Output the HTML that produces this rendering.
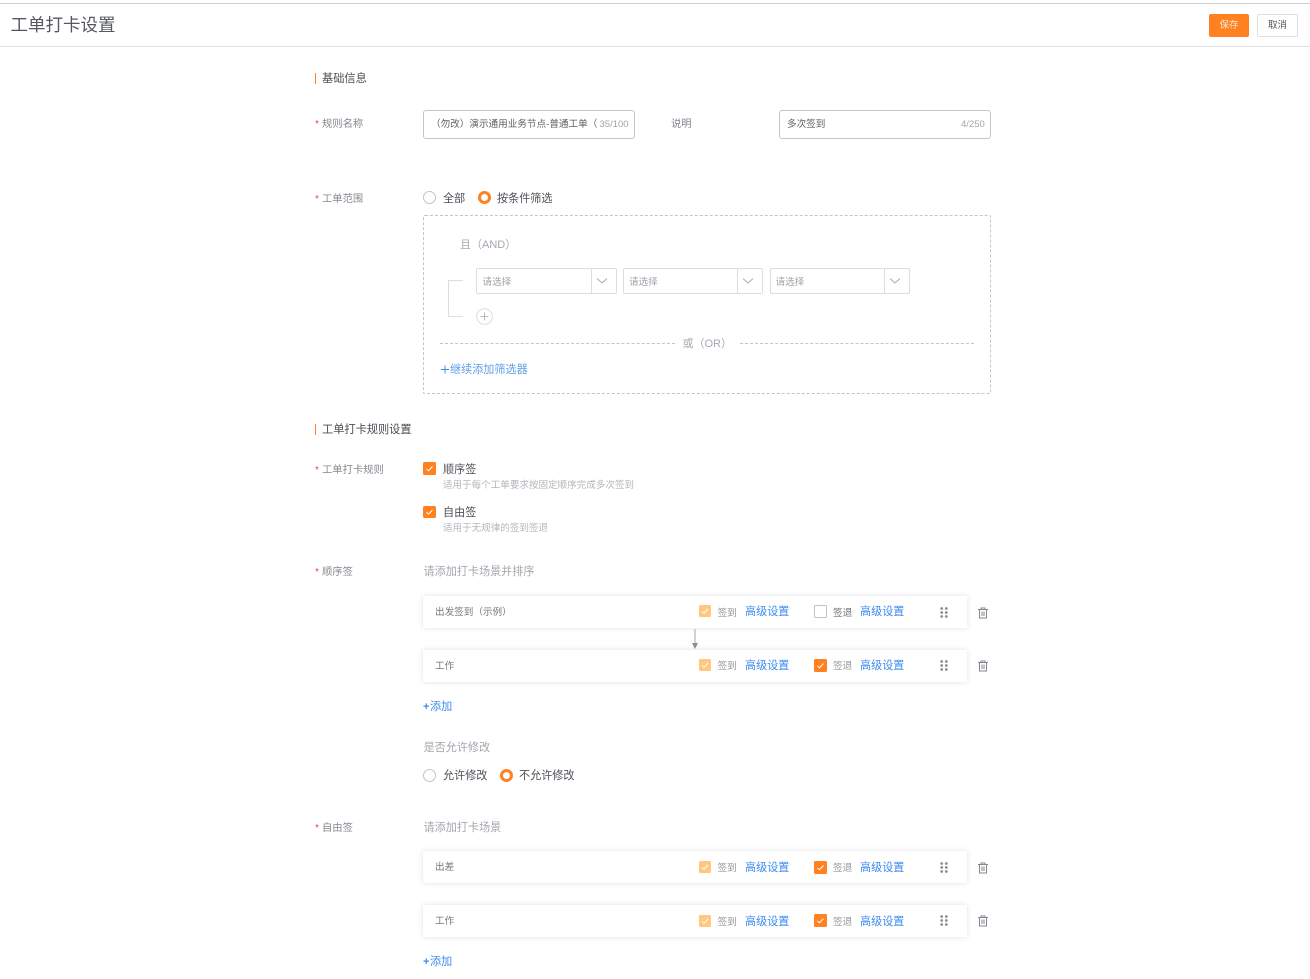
<!DOCTYPE html>
<html lang="zh"><head><meta charset="utf-8"><title>工单打卡设置</title>
<style>
html,body{margin:0;padding:0;background:#fff}
#p{position:relative;width:1310px;height:979px;overflow:hidden;background:#fff;font-family:"Liberation Sans","Noto Sans CJK SC",sans-serif;color:#55585f}
#p div{position:absolute;box-sizing:border-box}
.t{white-space:nowrap;line-height:16px;height:16px;margin-top:1px;filter:blur(.25px)}
.l{font-size:10.3px;color:#85888f;margin-top:2px}
.req{font-size:10px;color:#f0443e}
.sec{font-size:11.2px;color:#4a4d54}
.hint{font-size:11.1px;color:#a3a6ad}
.sub{font-size:9.55px;color:#b4b6bc;margin-top:2px}
.opt{font-size:11.1px;color:#4d5057}
.lk{font-size:11.1px;color:#3f8cf0}
.lk b{font-weight:700;letter-spacing:.5px}
.sg{font-size:9.7px;color:#93959b;margin-top:2px}
.rt{font-size:9.6px;color:#74777d;margin-top:2px}
.ph{font-size:9.6px;color:#9fa2a8;margin-top:2px}
.inp{font-size:9.6px;color:#5c5f66;margin-top:2px}
.card{left:423px;width:544px;height:32px;background:#fff;box-shadow:0 0 5px rgba(60,70,100,.16)}
.cb{width:13px;height:13px;border-radius:1.5px;background:#ff8120}
.cb.dis{background:#ffc880;width:12px;height:12px}
.cb.off{background:#fff;border:1px solid #bfc1c9}
.cb svg{position:absolute;left:0;top:0;width:100%;height:100%}
.sel{width:141px;height:26px;top:268px;border:1px solid #dcdde2;border-radius:2px}
.sel i{position:absolute;right:24px;top:0;bottom:0;border-left:1px solid #dcdde2;width:0}
.sel svg{position:absolute;right:8px;top:8px}
.radio{width:13px;height:13px;border-radius:50%;border:1px solid #c2c4cb;background:#fff}
.radio.on{border:3.5px solid #ff8120}
</style></head><body>
<div id="p">
<div style="left:0;top:3px;width:1310px;height:1px;background:#cfcfcf"></div>
<div style="left:0;top:46px;width:1310px;height:1px;background:#e0e0e6"></div>
<div class="t" style="left:10.500px;top:15px;height:20px;line-height:20px;margin-top:0;font-size:17.500px;color:#55585e">工单打卡设置</div>
<div class="t" style="left:1209px;top:14px;width:40px;height:23px;line-height:23px;margin-top:0;background:#ff8120;border-radius:2px;color:#ffe6d2;font-size:9.500px;text-align:center">保存</div>
<div class="t" style="left:1257px;top:14px;width:41px;height:23px;line-height:21px;margin-top:0;border:1px solid #dfe0e6;border-radius:2px;color:#55585f;font-size:9.500px;text-align:center">取消</div>

<div style="left:315px;top:73px;width:1px;height:11px;background:#ff8120"></div>
<div class="t sec" style="left:322px;top:70px">基础信息</div>
<div class="t req" style="left:315px;top:116px">*</div>
<div class="t l" style="left:322px;top:115px">规则名称</div>
<div style="left:423px;top:110px;width:212px;height:29px;border:1px solid #c4c6cf;border-radius:3px"></div>
<div class="t inp" style="left:431px;top:115px;width:166px;overflow:hidden">（勿改）演示通用业务节点-普通工单（示例）</div>
<div class="t" style="left:599.500px;top:116px;font-size:9.500px;color:#a3a5ab">35/100</div>
<div class="t l" style="left:671px;top:115px">说明</div>
<div style="left:779px;top:110px;width:212px;height:29px;border:1px solid #c4c6cf;border-radius:3px"></div>
<div class="t inp" style="left:787px;top:115px">多次签到</div>
<div class="t" style="left:961px;top:116px;font-size:9.500px;color:#a3a5ab">4/250</div>

<div class="t req" style="left:315px;top:191px">*</div>
<div class="t l" style="left:322px;top:190px">工单范围</div>
<div class="radio" style="left:423px;top:191px"></div>
<div class="t opt" style="left:443px;top:190px">全部</div>
<div class="radio on" style="left:477.500px;top:191px"></div>
<div class="t opt" style="left:497px;top:190px">按条件筛选</div>

<div style="left:423px;top:215px;width:568px;height:179px;border:1px dashed #c4c5ca;border-radius:2px"></div>
<div class="t" style="left:460px;top:236px;font-size:11px;color:#a4a8b2">且（AND）</div>
<div class="sel" style="left:476px"><i></i><svg width="12" height="8" viewBox="0 0 12 8"><path d="M1 1.500L6 6l5-4.500" fill="none" stroke="#a9abb3" stroke-width="1"/></svg></div>
<div class="t ph" style="left:482.500px;top:273px">请选择</div>
<div class="sel" style="left:623px;width:140px"><i></i><svg width="12" height="8" viewBox="0 0 12 8"><path d="M1 1.500L6 6l5-4.500" fill="none" stroke="#a9abb3" stroke-width="1"/></svg></div>
<div class="t ph" style="left:629px;top:273px">请选择</div>
<div class="sel" style="left:770px;width:140px"><i></i><svg width="12" height="8" viewBox="0 0 12 8"><path d="M1 1.500L6 6l5-4.500" fill="none" stroke="#a9abb3" stroke-width="1"/></svg></div>
<div class="t ph" style="left:775.500px;top:273px">请选择</div>
<div style="left:448px;top:280px;width:15px;height:37px;border:1px solid #dcdde1;border-right:0"></div>
<svg style="position:absolute;left:476px;top:308px" width="17" height="17" viewBox="0 0 17 17"><circle cx="8.500" cy="8.500" r="7.800" fill="none" stroke="#dcdde1"/><path d="M4.500 8.500h8M8.500 4.500v8" stroke="#b9bbc1" fill="none"/></svg>
<div style="left:440px;top:343px;width:235px;border-top:1px dashed #c4c5ca"></div>
<div style="left:740px;top:343px;width:234px;border-top:1px dashed #c4c5ca"></div>
<div class="t" style="left:682.500px;top:335px;font-size:11px;color:#a4a8b2">或（OR）</div>
<svg style="position:absolute;left:441px;top:365px" width="9" height="9" viewBox="0 0 9 9"><path d="M0 4.500h8M4 .5v8" stroke="#3f8cf0" fill="none"/></svg>
<div class="t lk" style="left:450px;top:361px;color:#5d9fe6">继续添加筛选器</div>

<div style="left:315px;top:424px;width:1px;height:11px;background:#ff8120"></div>
<div class="t sec" style="left:322px;top:421px">工单打卡规则设置</div>
<div class="t req" style="left:315px;top:462px">*</div>
<div class="t l" style="left:322px;top:461px">工单打卡规则</div>
<div class="cb" style="left:423px;top:462px"><svg viewBox="0 0 13 13"><path d="M3.500 6.800l2 2 4-4.300" fill="none" stroke="#fff" stroke-width="1"/></svg></div>
<div class="t opt" style="left:443px;top:461px">顺序签</div>
<div class="t sub" style="left:443px;top:476px">适用于每个工单要求按固定顺序完成多次签到</div>
<div class="cb" style="left:423px;top:506px;height:12px"><svg viewBox="0 0 13 12"><path d="M3.500 6.300l2 2 4-4.300" fill="none" stroke="#fff" stroke-width="1"/></svg></div>
<div class="t opt" style="left:443px;top:504px">自由签</div>
<div class="t sub" style="left:443px;top:519px">适用于无规律的签到签退</div>

<div class="t req" style="left:315px;top:564px">*</div>
<div class="t l" style="left:322px;top:563px">顺序签</div>
<div class="t hint" style="left:423.500px;top:563px">请添加打卡场景并排序</div>

<!-- row 1 -->
<div class="card" style="top:596px"></div>
<div class="t rt" style="left:435px;top:603px">出发签到（示例）</div>
<div class="cb dis" style="left:699px;top:605px"><svg viewBox="0 0 12 12"><path d="M3 6.300l2 2 4-4.300" fill="none" stroke="#fff" stroke-width="1"/></svg></div>
<div class="t sg" style="left:717.500px;top:604px">签到</div>
<div class="t lk" style="left:745px;top:603px">高级设置</div>
<div class="cb off" style="left:814px;top:605px"></div>
<div class="t sg" style="left:833px;top:604px;color:#6a6d73">签退</div>
<div class="t lk" style="left:860px;top:603px">高级设置</div>
<svg style="position:absolute;left:939px;top:606px" width="10" height="13" viewBox="0 0 10 13"><g fill="#8a8d96"><circle cx="2.700" cy="2.500" r="1.400"/><circle cx="7.300" cy="2.500" r="1.400"/><circle cx="2.700" cy="6.500" r="1.400"/><circle cx="7.300" cy="6.500" r="1.400"/><circle cx="2.700" cy="10.500" r="1.400"/><circle cx="7.300" cy="10.500" r="1.400"/></g></svg>
<svg style="position:absolute;left:977px;top:607px" width="12" height="12" viewBox="0 0 12 12"><path d="M1 2.500h10M4 2.500V1h4v1.500M2.500 2.500v8.500h7v-8.500M5 4.500v4.500M7 4.500v4.500" fill="none" stroke="#85878e" stroke-width="1"/></svg>
<svg style="position:absolute;left:691px;top:628px" width="8" height="22" viewBox="0 0 8 22"><path d="M4 1v15" stroke="#a5a7ae" fill="none"/><path d="M1 15h6l-3 6z" fill="#8e9098"/></svg>

<!-- row 2 -->
<div class="card" style="top:650px"></div>
<div class="t rt" style="left:435px;top:657px">工作</div>
<div class="cb dis" style="left:699px;top:659px"><svg viewBox="0 0 12 12"><path d="M3 6.300l2 2 4-4.300" fill="none" stroke="#fff" stroke-width="1"/></svg></div>
<div class="t sg" style="left:717.500px;top:657px">签到</div>
<div class="t lk" style="left:745px;top:657px">高级设置</div>
<div class="cb" style="left:814px;top:659px"><svg viewBox="0 0 13 13"><path d="M3.500 6.800l2 2 4-4.300" fill="none" stroke="#fff" stroke-width="1"/></svg></div>
<div class="t sg" style="left:833px;top:657px">签退</div>
<div class="t lk" style="left:860px;top:657px">高级设置</div>
<svg style="position:absolute;left:939px;top:659px" width="10" height="13" viewBox="0 0 10 13"><g fill="#8a8d96"><circle cx="2.700" cy="2.500" r="1.400"/><circle cx="7.300" cy="2.500" r="1.400"/><circle cx="2.700" cy="6.500" r="1.400"/><circle cx="7.300" cy="6.500" r="1.400"/><circle cx="2.700" cy="10.500" r="1.400"/><circle cx="7.300" cy="10.500" r="1.400"/></g></svg>
<svg style="position:absolute;left:977px;top:660px" width="12" height="12" viewBox="0 0 12 12"><path d="M1 2.500h10M4 2.500V1h4v1.500M2.500 2.500v8.500h7v-8.500M5 4.500v4.500M7 4.500v4.500" fill="none" stroke="#85878e" stroke-width="1"/></svg>

<div class="t lk" style="left:423px;top:698px"><b>+</b>添加</div>
<div class="t hint" style="left:423.500px;top:739px">是否允许修改</div>
<div class="radio" style="left:423px;top:769px"></div>
<div class="t opt" style="left:443px;top:767px">允许修改</div>
<div class="radio on" style="left:500px;top:769px"></div>
<div class="t opt" style="left:519px;top:767px">不允许修改</div>

<div class="t req" style="left:315px;top:820px">*</div>
<div class="t l" style="left:322px;top:819px">自由签</div>
<div class="t hint" style="left:423.500px;top:819px">请添加打卡场景</div>

<!-- row 3 -->
<div class="card" style="top:851px"></div>
<div class="t rt" style="left:435px;top:858px">出差</div>
<div class="cb dis" style="left:699px;top:861px"><svg viewBox="0 0 12 12"><path d="M3 6.300l2 2 4-4.300" fill="none" stroke="#fff" stroke-width="1"/></svg></div>
<div class="t sg" style="left:717.500px;top:859px">签到</div>
<div class="t lk" style="left:745px;top:859px">高级设置</div>
<div class="cb" style="left:814px;top:861px"><svg viewBox="0 0 13 13"><path d="M3.500 6.800l2 2 4-4.300" fill="none" stroke="#fff" stroke-width="1"/></svg></div>
<div class="t sg" style="left:833px;top:859px">签退</div>
<div class="t lk" style="left:860px;top:859px">高级设置</div>
<svg style="position:absolute;left:939px;top:861px" width="10" height="13" viewBox="0 0 10 13"><g fill="#8a8d96"><circle cx="2.700" cy="2.500" r="1.400"/><circle cx="7.300" cy="2.500" r="1.400"/><circle cx="2.700" cy="6.500" r="1.400"/><circle cx="7.300" cy="6.500" r="1.400"/><circle cx="2.700" cy="10.500" r="1.400"/><circle cx="7.300" cy="10.500" r="1.400"/></g></svg>
<svg style="position:absolute;left:977px;top:862px" width="12" height="12" viewBox="0 0 12 12"><path d="M1 2.500h10M4 2.500V1h4v1.500M2.500 2.500v8.500h7v-8.500M5 4.500v4.500M7 4.500v4.500" fill="none" stroke="#85878e" stroke-width="1"/></svg>

<!-- row 4 -->
<div class="card" style="top:905px"></div>
<div class="t rt" style="left:435px;top:912px">工作</div>
<div class="cb dis" style="left:699px;top:915px"><svg viewBox="0 0 12 12"><path d="M3 6.300l2 2 4-4.300" fill="none" stroke="#fff" stroke-width="1"/></svg></div>
<div class="t sg" style="left:717.500px;top:913px">签到</div>
<div class="t lk" style="left:745px;top:913px">高级设置</div>
<div class="cb" style="left:814px;top:914px"><svg viewBox="0 0 13 13"><path d="M3.500 6.800l2 2 4-4.300" fill="none" stroke="#fff" stroke-width="1"/></svg></div>
<div class="t sg" style="left:833px;top:913px">签退</div>
<div class="t lk" style="left:860px;top:913px">高级设置</div>
<svg style="position:absolute;left:939px;top:914px" width="10" height="13" viewBox="0 0 10 13"><g fill="#8a8d96"><circle cx="2.700" cy="2.500" r="1.400"/><circle cx="7.300" cy="2.500" r="1.400"/><circle cx="2.700" cy="6.500" r="1.400"/><circle cx="7.300" cy="6.500" r="1.400"/><circle cx="2.700" cy="10.500" r="1.400"/><circle cx="7.300" cy="10.500" r="1.400"/></g></svg>
<svg style="position:absolute;left:977px;top:915px" width="12" height="12" viewBox="0 0 12 12"><path d="M1 2.500h10M4 2.500V1h4v1.500M2.500 2.500v8.500h7v-8.500M5 4.500v4.500M7 4.500v4.500" fill="none" stroke="#85878e" stroke-width="1"/></svg>

<div class="t lk" style="left:423px;top:953px"><b>+</b>添加</div>
</div>
</body></html>
